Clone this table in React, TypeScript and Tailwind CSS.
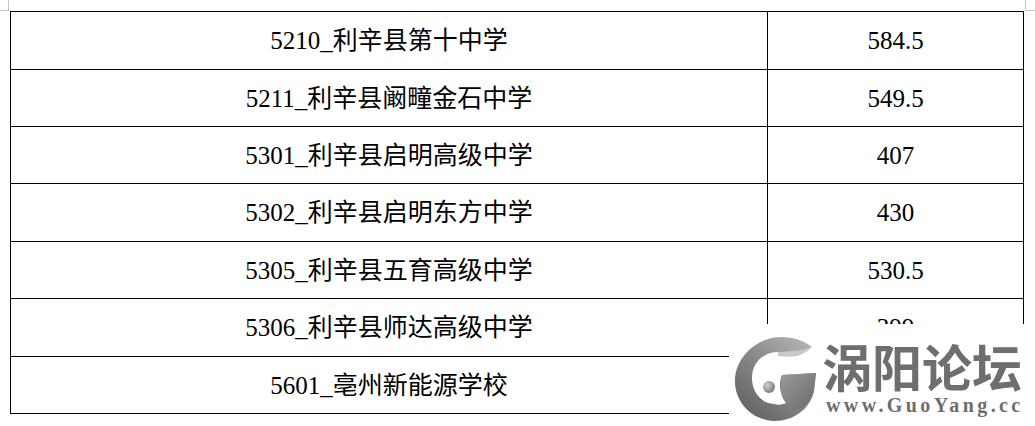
import React from "react";

interface RowType {
    name: string,
    score: string,
    h: string,
}

const rows: RowType[] = [
    {name: "5210_利辛县第十中学", score: "584.5", h: "h-[58px]"},
    {name: "5211_利辛县阚疃金石中学", score: "549.5", h: "h-[57px]"},
    {name: "5301_利辛县启明高级中学", score: "407", h: "h-[57px]"},
    {name: "5302_利辛县启明东方中学", score: "430", h: "h-[58px]"},
    {name: "5305_利辛县五育高级中学", score: "530.5", h: "h-[57px]"},
    {name: "5306_利辛县师达高级中学", score: "399", h: "h-[58px]"},
    {name: "5601_亳州新能源学校", score: "", h: "h-[57px]"},
];

// G mark of the forum watermark
function GuoYangLogo() {
    return (
        <svg width="95" height="101" viewBox="0 0 95 101" className="shrink-0 ml-px mt-px">
            <defs>
                <linearGradient id="ring" x1="0.9" y1="0" x2="0.1" y2="1">
                    <stop offset="0" stopColor="#b8b8b8"/>
                    <stop offset="0.45" stopColor="#8a8a8a"/>
                    <stop offset="1" stopColor="#5e5e5e"/>
                </linearGradient>
                <linearGradient id="tongue" x1="0" y1="0" x2="1" y2="1">
                    <stop offset="0" stopColor="#9a9a9a"/>
                    <stop offset="1" stopColor="#6a6a6a"/>
                </linearGradient>
                <radialGradient id="ball" cx="0.35" cy="0.35" r="0.7">
                    <stop offset="0" stopColor="#d0d0d0"/>
                    <stop offset="1" stopColor="#7c7c7c"/>
                </radialGradient>
            </defs>
            <path
                d="M82 22 C70 12 50 9 35 15 C15 23 4 41 5 58 C6 78 22 95 44 96 C64 96 80 84 84 66 L86 48 L52 50 C48 58 50 70 56 78 C52 80 48 80 44 79 C30 78 22 66 22 53 C22 37 34 27 48 27 C62 27 72 27 82 22 Z"
                fill="url(#ring)"
            />
            <path d="M52 50 L86 48 L84 66 C80 80 70 88 60 82 C52 74 49 60 52 50 Z" fill="url(#tongue)"/>
            <path d="M48 27 C62 26 72 26 82 22 C72 32 62 33 48 31 Z" fill="#c8c8c8"/>
            <circle cx="39" cy="62" r="6" fill="url(#ball)"/>
        </svg>
    );
}

export default function App() {
    return (
        <div className="relative w-[1035px] h-[426px] bg-white overflow-hidden pt-[11px] pl-[10px]"
            style={{fontFamily: '"Liberation Serif", "Noto Sans CJK SC", serif'}}>

            {/* page corner marks */}
            <div className="absolute left-0 top-0 w-[9px] h-[11px] border-r border-b border-[#c4c4c4]"/>
            <div className="absolute right-0 top-0 w-[10px] h-[11px] border-l border-b border-[#c4c4c4]"/>

            <div className="w-[1014px] border-t border-l border-black">
                {rows.map((r) => (
                    <div key={r.name} className={`grid grid-cols-[757px_256px] ${r.h}`}>
                        <div className="flex items-center justify-center border-r border-b border-black text-[25px] text-black leading-none">
                            {r.name}
                        </div>
                        <div className="flex items-center justify-center border-r border-b border-black text-[25px] text-black leading-none">
                            {r.score}
                        </div>
                    </div>
                ))}
            </div>

            {/* watermark */}
            <div className="absolute left-[729px] top-[324px] right-0 bottom-0 bg-white flex">
                <GuoYangLogo/>
                <div className="-ml-[3px] pt-[18px] flex flex-col text-[#6e6e6e]">
                    <div className="text-[50px] font-bold leading-[46px]"
                        style={{fontFamily: '"Noto Sans CJK SC", sans-serif'}}>
                        涡阳论坛
                    </div>
                    <div className="mt-[7px] ml-[4px] text-[20px] font-bold leading-none tracking-[3.4px]"
                        style={{fontFamily: '"Liberation Serif", serif'}}>
                        www.GuoYang.cc
                    </div>
                </div>
            </div>
        </div>
    );
}
